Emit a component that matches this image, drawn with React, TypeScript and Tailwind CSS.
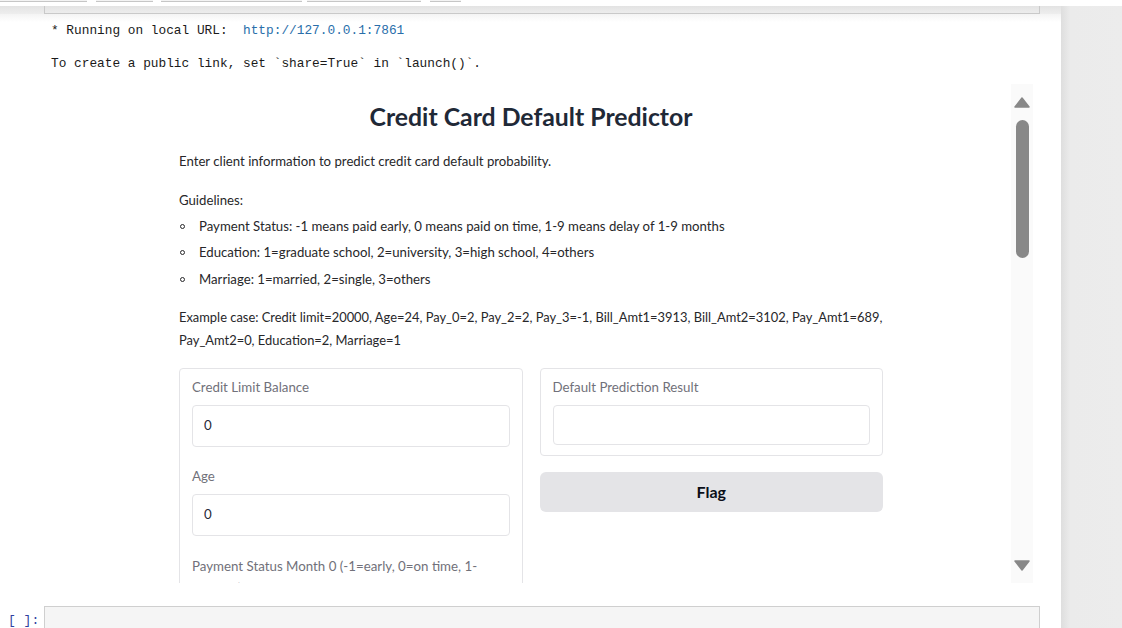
const tabs = [
  { left: 0, width: 87 },
  { left: 96, width: 57 },
  { left: 161, width: 141 },
  { left: 307, width: 114 },
  { left: 430, width: 31 },
];

const guidelines = [
  "Payment Status: -1 means paid early, 0 means paid on time, 1-9 means delay of 1-9 months",
  "Education: 1=graduate school, 2=university, 3=high school, 4=others",
  "Marriage: 1=married, 2=single, 3=others",
];

const NumberField = ({ label, value }: { label: string; value: string }) => (
  <div>
    <div className="text-[13.3px] leading-[20px] text-[#71717a]">{label}</div>
    <div className="mt-[8px] h-[42px] rounded-[4px] border border-[#e4e4e7] bg-white flex items-center px-[11px] text-[13.3px] text-[#1f2937]">
      {value}
    </div>
  </div>
);

const GradioApp = () => {
  return (
    <div className="flex-1 h-full overflow-hidden font-['Lato',sans-serif] text-[#27272a]">
      <div className="w-[704px] mx-auto pt-[18px]">
        <h1 className="text-center text-[24.8px] leading-[30px] font-bold text-[#1f2937]">
          Credit Card Default Predictor
        </h1>

        <div className="mt-[18px] text-[13.2px] leading-[23px]">
          <p>Enter client information to predict credit card default probability.</p>
          <p className="mt-[16px]">Guidelines:</p>
          <ul className="mt-[1px]">
            {guidelines.map((g) => (
              <li key={g} className="flex items-center h-[26.5px]">
                <span className="w-[5px] h-[5px] ml-[1px] mr-[14px] rounded-full border border-[#27272a]" />
                {g}
              </li>
            ))}
          </ul>
          <p className="mt-[13px] whitespace-nowrap text-[12.9px] leading-[23px]">
            Example case: Credit limit=20000, Age=24, Pay_0=2, Pay_2=2, Pay_3=-1, Bill_Amt1=3913, Bill_Amt2=3102, Pay_Amt1=689,
            <br />
            Pay_Amt2=0, Education=2, Marriage=1
          </p>
        </div>

        <div className="mt-[16px] grid grid-cols-2 gap-[17px] items-start">
          <div className="rounded-[4px] border border-[#e4e4e7] px-[12px] pt-[8px] pb-[12px] flex flex-col gap-[19px]">
            <NumberField label="Credit Limit Balance" value="0" />
            <NumberField label="Age" value="0" />
            <div className="text-[13.3px] leading-[22px] text-[#71717a]">
              Payment Status Month 0 (-1=early, 0=on time, 1-9=delay)
            </div>
          </div>

          <div className="flex flex-col gap-[16px]">
            <div className="rounded-[4px] border border-[#e4e4e7] px-[12px] pt-[8px] pb-[10px]">
              <div className="text-[13.3px] leading-[20px] text-[#71717a]">Default Prediction Result</div>
              <div className="mt-[8px] h-[40px] rounded-[4px] border border-[#e4e4e7] bg-white" />
            </div>
            <button className="h-[40px] rounded-[6px] bg-[#e4e4e7] text-[16px] font-bold text-[#0b0f19]">
              Flag
            </button>
          </div>
        </div>
      </div>
    </div>
  );
};

const Scrollbar = () => (
  <div className="w-[22px] h-full bg-[#fafafa] flex flex-col items-center">
    <svg width="16" height="11" viewBox="0 0 16 11" className="mt-[13px] shrink-0">
      <path d="M8 1 L15 10 L1 10 Z" fill="#888" stroke="#888" strokeLinejoin="round" strokeWidth="1.5" />
    </svg>
    <div className="mt-[12px] w-[13px] h-[138px] rounded-full bg-[#888] shrink-0" />
    <div className="flex-1" />
    <svg width="16" height="11" viewBox="0 0 16 11" className="mb-[12px] shrink-0">
      <path d="M1 1 L15 1 L8 10 Z" fill="#888" stroke="#888" strokeLinejoin="round" strokeWidth="1.5" />
    </svg>
  </div>
);

export default function App() {
  return (
    <div className="w-[1122px] h-[628px] overflow-hidden bg-white flex">
      <div className="w-[1061px] h-full flex flex-col overflow-hidden">
        {/* toolbar bottoms */}
        <div className="relative h-[6px] shrink-0">
          {tabs.map((t) => (
            <div
              key={t.left}
              className="absolute top-0 h-[2px] border-b border-[#c6c6c6] bg-[#f3f3f3]"
              style={{ left: t.left, width: t.width }}
            />
          ))}
        </div>
        {/* previous cell edge */}
        <div className="h-[8px] shrink-0 bg-gradient-to-b from-[#e3e3e3] to-[#eeeeee] flex">
          <div className="w-[44px]" />
          <div className="w-[996px] border-l border-r border-b border-[#c9c9c9]" />
        </div>
        <div className="h-[8px] shrink-0 bg-gradient-to-b from-[#f4f4f4] to-white" />

        {/* output */}
        <div className="shrink-0 pl-[51px] font-['Liberation_Mono',monospace] text-[12.8px] leading-[16px] text-[#1a1a1a]">
          <div className="mt-[1px]">
            * Running on local URL:&nbsp; <span className="text-[#296eaa]">http://127.0.0.1:7861</span>
          </div>
          <div className="mt-[17px]">To create a public link, set `share=True` in `launch()`.</div>
        </div>

        {/* gradio iframe */}
        <div className="shrink-0 mt-[12px] ml-[51px] w-[982px] h-[499px] flex">
          <GradioApp />
          <Scrollbar />
        </div>

        {/* next cell */}
        <div className="shrink-0 mt-[23px] flex items-start">
          <div className="w-[44px] pl-[8px] pt-[6px] font-['Liberation_Mono',monospace] text-[13px] leading-[18px] text-[#303f9f] whitespace-pre">
            [ ]:
          </div>
          <div className="w-[996px] h-[40px] bg-[#f5f5f5] border border-[#cfcfcf]" />
        </div>
      </div>

      {/* right panel */}
      <div className="w-[61px] h-full flex flex-col">
        <div className="h-[6px] bg-white" />
        <div className="flex-1 bg-gradient-to-r from-[#dedede] via-[#ebebeb] via-[15%] to-[#ececec]" />
      </div>
    </div>
  );
}
